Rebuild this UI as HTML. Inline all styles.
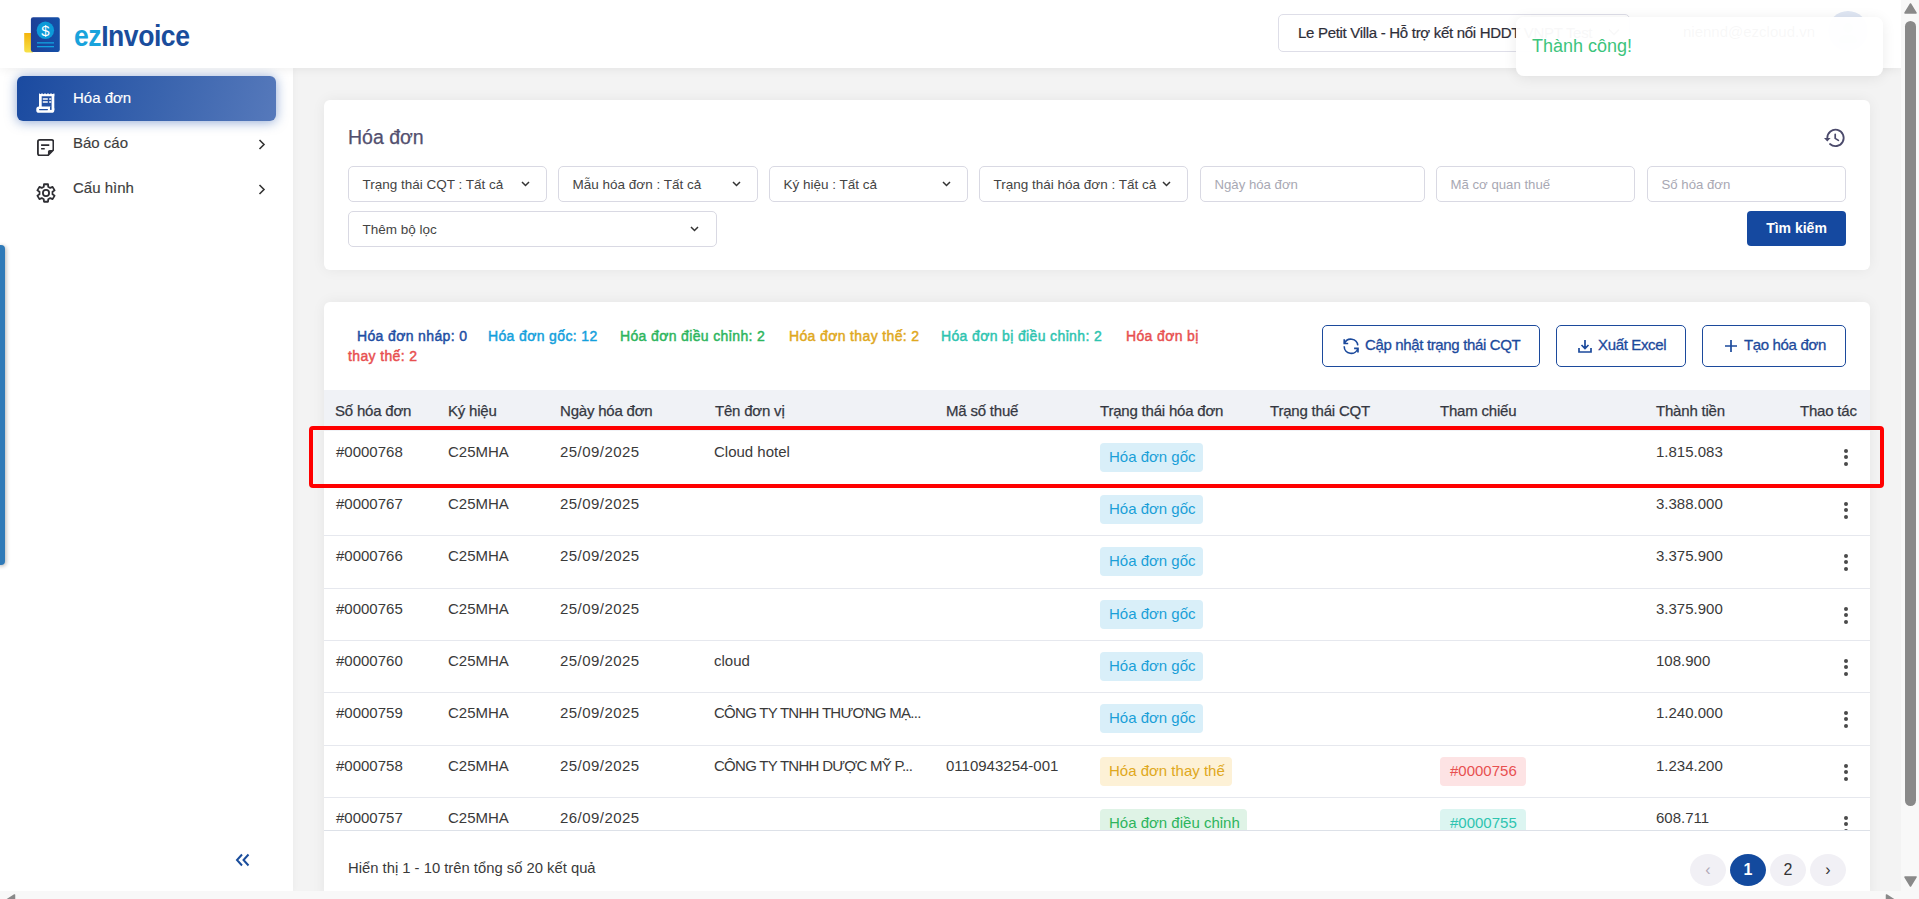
<!DOCTYPE html>
<html><head><meta charset="utf-8">
<style>
*{box-sizing:border-box;margin:0;padding:0}
html,body{width:1919px;height:899px;overflow:hidden;background:#f3f3f3;font-family:"Liberation Sans",sans-serif;color:#333}
.abs{position:absolute}
#header{position:absolute;left:0;top:0;width:1901px;height:68px;background:#fff;z-index:5;box-shadow:0 1px 10px rgba(0,0,0,0.07)}
#sidebar{position:absolute;left:0;top:68px;width:293px;height:823px;background:#fff;z-index:4;box-shadow:1px 0 6px rgba(0,0,0,0.03)}
#content{position:absolute;left:293px;top:68px;width:1608px;height:823px;background:#f3f3f3;overflow:hidden}
.card{position:absolute;background:#fff;border-radius:6px;box-shadow:0 0 14px rgba(0,0,0,0.06)}
.menu{position:absolute;left:17px;width:259px;height:45px;border-radius:6px}
.menu .t{position:absolute;left:56px;top:13px;font-size:15px;color:#3d3d3d;-webkit-text-stroke:0.15px currentColor}
.sel{position:absolute;height:36px;border:1px solid #d9d9e3;border-radius:5px;background:#fff;font-size:13.5px;color:#444}
.sel .t{position:absolute;left:13.5px;top:10px;white-space:nowrap}
.sel .ph{color:#a8a8b3;font-size:13.2px}
.sel svg{position:absolute;top:13px}
.stat{position:absolute;font-size:14px;white-space:nowrap;letter-spacing:0.36px;-webkit-text-stroke:0.45px currentColor}
.btn{position:absolute;height:42px;border:1px solid #1c4a9c;border-radius:5px;color:#1c4a9c;font-size:14px;background:#fff}
.btn .t{position:absolute;top:9.5px;white-space:nowrap;font-size:15px;letter-spacing:-0.35px;-webkit-text-stroke:0.3px #1c4a9c}
.th{position:absolute;top:12px;font-size:15px;color:#353842;-webkit-text-stroke:0.25px #353842;letter-spacing:-0.2px;white-space:nowrap}
.row{position:absolute;left:0;width:1546px;height:52px;border-bottom:1px solid #e6e8ee;background:#fff}
.td{position:absolute;top:10.7px;font-size:15px;color:#3a3a3a;white-space:nowrap}
.row:first-child .td{top:11.7px}
.tag{position:absolute;top:11px;height:29px;border-radius:4px;font-size:15px;padding:5px 7px 0 9px;white-space:nowrap}
.g{background:#d9eff9;color:#1a9fd8}
.pg{top:854px;width:36px;height:32px;border-radius:50%;background:#f1f0f5;color:#333;font-size:16px;text-align:center;padding-top:7px}
.y{background:#fdf1d6;color:#e0a820}
.gr{background:#dff3e6;color:#2db55d}
.r{background:#fde3e4;color:#e85050;padding-left:10px!important;padding-right:9px!important}
.tl{background:#dcf5f1;color:#2ec4b0;padding-left:10px!important;padding-right:9px!important}
.dots{position:absolute;left:1520px;top:18px;width:4px}
.dots i{display:block;width:4.2px;height:4.2px;border-radius:50%;background:#4a4a4a;margin-bottom:2.1px}
</style></head>
<body>
<!-- header -->
<div id="header">
  <svg class="abs" style="left:20px;top:14px" width="44" height="42" viewBox="20 14 44 42">
    <defs><linearGradient id="yg" x1="0" y1="0" x2="0" y2="1"><stop offset="0" stop-color="#f4b40c"/><stop offset="1" stop-color="#f7e24a"/></linearGradient>
    <linearGradient id="bg" x1="0" y1="0" x2="1" y2="0"><stop offset="0" stop-color="#1d3f97"/><stop offset="1" stop-color="#1450a8"/></linearGradient></defs>
    <path d="M24.2 33.1 L33 33.1 L33 52.4 L26.7 52.4 Q24.2 52.4 24.2 49.9 Z" fill="url(#yg)"/>
    <rect x="30.9" y="17.2" width="28.9" height="34.8" rx="2.2" fill="url(#bg)"/>
    <circle cx="45.4" cy="30.3" r="8.7" fill="#0c9ad8"/>
    <text x="45.4" y="35.8" font-size="15" font-family="Liberation Sans" fill="#fff" text-anchor="middle">$</text>
    <rect x="37" y="42.2" width="17" height="1.3" fill="#12a2e0"/>
    <rect x="37" y="46" width="17" height="1.3" fill="#12a2e0"/>
  </svg>
  <div class="abs" style="left:74px;top:18.5px;font-size:29.5px;font-weight:bold;white-space:nowrap;letter-spacing:-0.5px;transform:scaleX(0.9);transform-origin:0 0"><span style="color:#19a3dc">ez</span><span style="color:#1a4d9c">Invoice</span></div>

  <div class="abs" style="left:1278px;top:14px;width:352px;height:38px;border:1px solid #dedee8;border-radius:5px">
    <div class="abs" style="left:19px;top:8.5px;font-size:15px;color:#2e2e38;white-space:nowrap;letter-spacing:-0.3px;-webkit-text-stroke:0.2px #2e2e38">Le Petit Villa - Hỗ trợ kết nối HDDT VNPT Test</div>
  </div>
  <svg class="abs" style="left:1608px;top:28px" width="12" height="8" viewBox="0 0 12 8"><path d="M1 1.5 L6 6.5 L11 1.5" fill="none" stroke="#555" stroke-width="1.6"/></svg>
  <div class="abs" style="left:1639px;top:23px;width:24px;height:20px;background:#f0f0f0;border-radius:2px"></div>
  <div class="abs" style="left:1683px;top:23px;font-size:15px;color:#333;white-space:nowrap">niennd@ezcloud.vn</div>
  <div class="abs" style="left:1828px;top:11px;width:40px;height:40px;border-radius:50%;background:#dfe6f3">
    <div class="abs" style="left:15px;top:12px;width:10px;height:10px;border-radius:50%;background:#c2cde2"></div>
    <div class="abs" style="left:11px;top:24px;width:18px;height:8px;border-radius:8px 8px 4px 4px;background:#c2cde2"></div></div>
</div>

<!-- sidebar -->
<div id="sidebar">
  <div class="menu" style="top:8px;background:linear-gradient(105deg,#1a4aa0 0%,#3a64ae 55%,#5679bb 100%);box-shadow:0 1px 12px rgba(30,80,170,0.5)">
    <svg class="abs" style="left:13px;top:12px" width="32" height="30" viewBox="0 0 32 30">
      <path d="M9 5.3 L10.5 6.3 L12 5.3 L13.5 6.3 L15 5.3 L16.5 6.3 L18 5.3 L19.5 6.3 L21 5.3 L22.5 6.3 L24.3 5.3 L24.3 8.2 L9 8.2 Z" fill="#fff"/>
      <rect x="9" y="6" width="2.7" height="13" fill="#fff"/>
      <rect x="21.6" y="6" width="2.7" height="16" fill="#fff"/>
      <rect x="12.6" y="10.2" width="5.4" height="1.5" rx="0.7" fill="#fff"/><rect x="19" y="10.2" width="2.4" height="1.5" rx="0.7" fill="#fff"/>
      <rect x="12.6" y="13.2" width="5.4" height="1.5" rx="0.7" fill="#fff"/><rect x="19" y="13.2" width="2.4" height="1.5" rx="0.7" fill="#fff"/>
      <rect x="6.3" y="18.5" width="18" height="6.3" rx="2.6" fill="#fff"/>
      <rect x="9" y="20.9" width="9" height="1.3" rx="0.6" fill="#1e4ea2"/>
      <rect x="20" y="18.3" width="1.6" height="3.6" fill="#2353a4"/>
    </svg>
    <div class="t" style="color:#fff">Hóa đơn</div>
  </div>
  <div class="menu" style="top:53px">
    <svg class="abs" style="left:20px;top:18px" width="17.3" height="17.3" viewBox="0 0 19 19">
      <path d="M3 1 L16 1 Q18 1 18 3 L18 12 L12 18 L3 18 Q1 18 1 16 L1 3 Q1 1 3 1 Z" fill="none" stroke="#2e2e33" stroke-width="2" stroke-linejoin="round"/>
      <path d="M4.5 6.7 L13.5 6.7 M4.5 10.7 L8.5 10.7" stroke="#2e2e33" stroke-width="1.9"/>
      <path d="M18 12 L12 18 L12 14 Q12 12 14 12 Z" fill="#2e2e33"/>
    </svg>
    <div class="t">Báo cáo</div>
    <svg class="abs" style="left:241px;top:18px" width="8" height="11" viewBox="0 0 8 11"><path d="M1.5 1 L6 5.5 L1.5 10" fill="none" stroke="#333" stroke-width="1.6"/></svg>
  </div>
  <div class="menu" style="top:98px">
    <svg class="abs" style="left:17.5px;top:16px" width="22" height="22" viewBox="-1 -1 22 22">
      <path d="M7.74 3.80 L7.98 1.23 L12.02 1.23 L12.26 3.80 L14.24 4.94 L16.58 3.86 L18.61 7.37 L16.50 8.85 L16.50 11.15 L18.61 12.63 L16.58 16.14 L14.24 15.06 L12.26 16.20 L12.02 18.77 L7.98 18.77 L7.74 16.20 L5.76 15.06 L3.42 16.14 L1.39 12.63 L3.50 11.15 L3.50 8.85 L1.39 7.37 L3.42 3.86 L5.76 4.94 Z" fill="none" stroke="#2e2e33" stroke-width="1.8" stroke-linejoin="round"/>
      <circle cx="10" cy="10" r="3.1" fill="none" stroke="#2e2e33" stroke-width="1.8"/>
    </svg>
    <div class="t">Cấu hình</div>
    <svg class="abs" style="left:241px;top:18px" width="8" height="11" viewBox="0 0 8 11"><path d="M1.5 1 L6 5.5 L1.5 10" fill="none" stroke="#333" stroke-width="1.6"/></svg>
  </div>
  <svg class="abs" style="left:235px;top:785px" width="16" height="14" viewBox="0 0 16 14"><path d="M7 1.5 L2 7 L7 12.5 M13.5 1.5 L8.5 7 L13.5 12.5" fill="none" stroke="#1a4d9c" stroke-width="2"/></svg>
</div>

<!-- content -->
<div id="content">
</div>

<!-- card 1 -->
<div class="card" style="left:324px;top:100px;width:1546px;height:170px"></div>
<div class="abs" style="left:348px;top:126px;font-size:19.5px;color:#524f6e;white-space:nowrap;-webkit-text-stroke:0.25px #524f6e">Hóa đơn</div>
<svg class="abs" style="left:1823px;top:127px" width="24" height="22" viewBox="0 0 24 22">
  <path d="M4.3 11 A8.2 8.2 0 1 1 7 17" fill="none" stroke="#4b4a6b" stroke-width="1.8" stroke-linecap="round"/>
  <path d="M1 11 L7.6 11 L4.3 14.4 Z" fill="#4b4a6b"/>
  <path d="M12.2 7.3 L12.2 11.4 L15.4 13.4" fill="none" stroke="#4b4a6b" stroke-width="1.7" stroke-linecap="round"/>
</svg>

<div class="sel" style="left:348px;top:166px;width:199px"><div class="t">Trạng thái CQT : Tất cả</div><svg style="left:172px" width="9" height="8" viewBox="0 0 9 8"><path d="M1 2 L4.5 5.5 L8 2" fill="none" stroke="#333" stroke-width="1.5"/></svg></div>
<div class="sel" style="left:558px;top:166px;width:200px"><div class="t">Mẫu hóa đơn : Tất cả</div><svg style="left:173px" width="9" height="8" viewBox="0 0 9 8"><path d="M1 2 L4.5 5.5 L8 2" fill="none" stroke="#333" stroke-width="1.5"/></svg></div>
<div class="sel" style="left:769px;top:166px;width:199px"><div class="t">Ký hiệu : Tất cả</div><svg style="left:172px" width="9" height="8" viewBox="0 0 9 8"><path d="M1 2 L4.5 5.5 L8 2" fill="none" stroke="#333" stroke-width="1.5"/></svg></div>
<div class="sel" style="left:979px;top:166px;width:209px"><div class="t">Trạng thái hóa đơn : Tất cả</div><svg style="left:182px" width="9" height="8" viewBox="0 0 9 8"><path d="M1 2 L4.5 5.5 L8 2" fill="none" stroke="#333" stroke-width="1.5"/></svg></div>
<div class="sel" style="left:1200px;top:166px;width:225px"><div class="t ph">Ngày hóa đơn</div></div>
<div class="sel" style="left:1436px;top:166px;width:199px"><div class="t ph">Mã cơ quan thuế</div></div>
<div class="sel" style="left:1647px;top:166px;width:199px"><div class="t ph">Số hóa đơn</div></div>
<div class="sel" style="left:348px;top:211px;width:369px"><div class="t">Thêm bộ lọc</div><svg style="left:341px" width="9" height="8" viewBox="0 0 9 8"><path d="M1 2 L4.5 5.5 L8 2" fill="none" stroke="#333" stroke-width="1.5"/></svg></div>
<div class="abs" style="left:1747px;top:211px;width:99px;height:35px;background:#1549a0;border-radius:4px;color:#fff;font-size:14px;font-weight:bold;text-align:center;padding-top:9px">Tìm kiếm</div>

<!-- card 2 -->
<div class="card" style="left:324px;top:302px;width:1546px;height:600px"></div>
<div class="stat" style="left:357px;top:328px;color:#1e4ea3">Hóa đơn nháp: 0</div>
<div class="stat" style="left:488px;top:328px;color:#14a0dc">Hóa đơn gốc: 12</div>
<div class="stat" style="left:620px;top:328px;color:#2db55d">Hóa đơn điều chỉnh: 2</div>
<div class="stat" style="left:789px;top:328px;color:#e0a820">Hóa đơn thay thế: 2</div>
<div class="stat" style="left:941px;top:328px;color:#2ec4b0">Hóa đơn bị điều chỉnh: 2</div>
<div class="stat" style="left:1126px;top:328px;color:#e85050">Hóa đơn bị</div>
<div class="stat" style="left:348px;top:348px;color:#e85050">thay thế: 2</div>

<div class="btn" style="left:1322px;top:325px;width:218px">
  <svg class="abs" style="left:19px;top:11px" width="18" height="18" viewBox="0 0 18 18"><path d="M15.8 8.4 A7 7 0 0 0 2.4 6.4" fill="none" stroke="#1c4a9c" stroke-width="1.6"/><path d="M2.25 2.2 L2.25 6.5 L6.2 6.5" fill="none" stroke="#1c4a9c" stroke-width="1.7"/><path d="M2.2 9.3 A7 7 0 0 0 15.9 11.4" fill="none" stroke="#1c4a9c" stroke-width="1.6"/><path d="M12.1 11.35 L15.96 11.35 L15.96 15.6" fill="none" stroke="#1c4a9c" stroke-width="1.7"/></svg>
  <div class="t" style="left:42px">Cập nhật trạng thái CQT</div></div>
<div class="btn" style="left:1556px;top:325px;width:130px">
  <svg class="abs" style="left:20px;top:12px" width="16" height="16" viewBox="0 0 16 16"><path d="M8 2 L8 10 M4.5 7 L8 10.5 L11.5 7 M2 10 L2 14 L14 14 L14 10" fill="none" stroke="#1c4a9c" stroke-width="1.7"/></svg>
  <div class="t" style="left:41px">Xuất Excel</div></div>
<div class="btn" style="left:1702px;top:325px;width:144px">
  <svg class="abs" style="left:21px;top:13px" width="14" height="14" viewBox="0 0 14 14"><path d="M7 1 L7 13 M1 7 L13 7" fill="none" stroke="#1c4a9c" stroke-width="1.7"/></svg>
  <div class="t" style="left:41px">Tạo hóa đơn</div></div>

<!-- table -->
<div class="abs" style="left:324px;top:390px;width:1546px;height:41px;background:#f0f2f6">
  <div class="th" style="left:11px">Số hóa đơn</div>
  <div class="th" style="left:124px">Ký hiệu</div>
  <div class="th" style="left:236px">Ngày hóa đơn</div>
  <div class="th" style="left:391px">Tên đơn vị</div>
  <div class="th" style="left:622px">Mã số thuế</div>
  <div class="th" style="left:776px">Trạng thái hóa đơn</div>
  <div class="th" style="left:946px">Trạng thái CQT</div>
  <div class="th" style="left:1116px">Tham chiếu</div>
  <div class="th" style="left:1332px">Thành tiền</div>
  <div class="th" style="left:1476px">Thao tác</div>
</div>
<div class="abs" style="left:324px;top:431px;width:1546px;height:400px;overflow:hidden">
<div class="row" style="top:0px;height:53px;border-bottom-color:transparent"><div class="td" style="left:12px">#0000768</div><div class="td" style="left:124px">C25MHA</div><div class="td" style="left:236px;letter-spacing:0.45px">25/09/2025</div><div class="td" style="left:390px">Cloud hotel</div><div class="tag g" style="left:776px;top:12px">Hóa đơn gốc</div><div class="td" style="left:1332px">1.815.083</div><div class="dots"><i></i><i></i><i></i></div></div>
<div class="row" style="top:53px;height:52px"><div class="td" style="left:12px">#0000767</div><div class="td" style="left:124px">C25MHA</div><div class="td" style="left:236px;letter-spacing:0.45px">25/09/2025</div><div class="tag g" style="left:776px">Hóa đơn gốc</div><div class="td" style="left:1332px">3.388.000</div><div class="dots"><i></i><i></i><i></i></div></div>
<div class="row" style="top:105px;height:53px"><div class="td" style="left:12px">#0000766</div><div class="td" style="left:124px">C25MHA</div><div class="td" style="left:236px;letter-spacing:0.45px">25/09/2025</div><div class="tag g" style="left:776px">Hóa đơn gốc</div><div class="td" style="left:1332px">3.375.900</div><div class="dots"><i></i><i></i><i></i></div></div>
<div class="row" style="top:158px;height:52px"><div class="td" style="left:12px">#0000765</div><div class="td" style="left:124px">C25MHA</div><div class="td" style="left:236px;letter-spacing:0.45px">25/09/2025</div><div class="tag g" style="left:776px">Hóa đơn gốc</div><div class="td" style="left:1332px">3.375.900</div><div class="dots"><i></i><i></i><i></i></div></div>
<div class="row" style="top:210px;height:52px"><div class="td" style="left:12px">#0000760</div><div class="td" style="left:124px">C25MHA</div><div class="td" style="left:236px;letter-spacing:0.45px">25/09/2025</div><div class="td" style="left:390px">cloud</div><div class="tag g" style="left:776px">Hóa đơn gốc</div><div class="td" style="left:1332px">108.900</div><div class="dots"><i></i><i></i><i></i></div></div>
<div class="row" style="top:262px;height:53px"><div class="td" style="left:12px">#0000759</div><div class="td" style="left:124px">C25MHA</div><div class="td" style="left:236px;letter-spacing:0.45px">25/09/2025</div><div class="td" style="left:390px;letter-spacing:-0.72px">CÔNG TY TNHH THƯƠNG MẠ...</div><div class="tag g" style="left:776px">Hóa đơn gốc</div><div class="td" style="left:1332px">1.240.000</div><div class="dots"><i></i><i></i><i></i></div></div>
<div class="row" style="top:315px;height:52px"><div class="td" style="left:12px">#0000758</div><div class="td" style="left:124px">C25MHA</div><div class="td" style="left:236px;letter-spacing:0.45px">25/09/2025</div><div class="td" style="left:390px;letter-spacing:-0.72px">CÔNG TY TNHH DƯỢC MỸ P...</div><div class="td" style="left:622px">0110943254-001</div><div class="tag y" style="left:776px">Hóa đơn thay thế</div><div class="tag r" style="left:1116px">#0000756</div><div class="td" style="left:1332px">1.234.200</div><div class="dots"><i></i><i></i><i></i></div></div>
<div class="row" style="top:367px;height:52px"><div class="td" style="left:12px">#0000757</div><div class="td" style="left:124px">C25MHA</div><div class="td" style="left:236px;letter-spacing:0.45px">26/09/2025</div><div class="tag gr" style="left:776px">Hóa đơn điều chỉnh</div><div class="tag tl" style="left:1116px">#0000755</div><div class="td" style="left:1332px">608.711</div><div class="dots"><i></i><i></i><i></i></div></div>

</div>
<div class="abs" style="left:324px;top:830px;width:1546px;height:1px;background:#dde1e8"></div>

<div class="abs" style="left:348px;top:860px;font-size:14.8px;color:#3a3a3a;white-space:nowrap">Hiển thị 1 - 10 trên tổng số 20 kết quả</div>
<div class="abs pg" style="left:1690px;color:#b0a8b8">‹</div>
<div class="abs pg" style="left:1730px;background:#134a9e;color:#fff;font-weight:bold">1</div>
<div class="abs pg" style="left:1770px">2</div>
<div class="abs pg" style="left:1810px">›</div>

<!-- red highlight -->
<div class="abs" style="left:309px;top:426px;width:1575px;height:62px;border:4px solid #f00;border-radius:4px"></div>
<!-- left blue tab -->
<div class="abs" style="left:-4px;top:245px;width:9px;height:320px;background:#2f7ab8;border-radius:4px;box-shadow:1px 1px 4px rgba(0,0,0,0.3);z-index:10"></div>
<!-- toast -->
<div class="abs" style="left:1516px;top:17px;width:367px;height:59px;background:rgba(255,255,255,0.965);border-radius:8px;box-shadow:0 2px 14px rgba(0,0,0,0.08);z-index:20">
  <div class="abs" style="left:16px;top:19px;font-size:18px;color:#3cc47c;white-space:nowrap">Thành công!</div>
</div>
<!-- scrollbars -->
<div class="abs" style="left:1901px;top:0;width:18px;height:899px;background:#f8f8f8;z-index:30"></div>
<div class="abs" style="left:1905px;top:21px;width:11px;height:785px;background:#898989;border-radius:6px;z-index:31"></div>
<svg class="abs" style="left:1904px;top:3px;z-index:31" width="13" height="11" viewBox="0 0 13 11"><path d="M6.5 1 L12 10 L1 10 Z" fill="#898989" stroke="#898989" stroke-linejoin="round" stroke-width="1.5"/></svg>
<svg class="abs" style="left:1904px;top:876px;z-index:31" width="13" height="11" viewBox="0 0 13 11"><path d="M6.5 10 L12 1 L1 1 Z" fill="#898989" stroke="#898989" stroke-linejoin="round" stroke-width="1.5"/></svg>
<div class="abs" style="left:0;top:891px;width:1901px;height:8px;background:#f8f8f8;z-index:30"></div>
<svg class="abs" style="left:0;top:891px;z-index:31" width="20" height="8" viewBox="0 0 20 8"><path d="M14.5 4 L14.5 14 L6.5 9 Z" fill="#898989" stroke="#898989" stroke-width="1.5" stroke-linejoin="round"/></svg>
<svg class="abs" style="left:1880px;top:891px;z-index:31" width="20" height="8" viewBox="0 0 20 8"><path d="M6.5 4 L6.5 14 L14.5 9 Z" fill="#898989" stroke="#898989" stroke-width="1.5" stroke-linejoin="round"/></svg>


</body></html>
